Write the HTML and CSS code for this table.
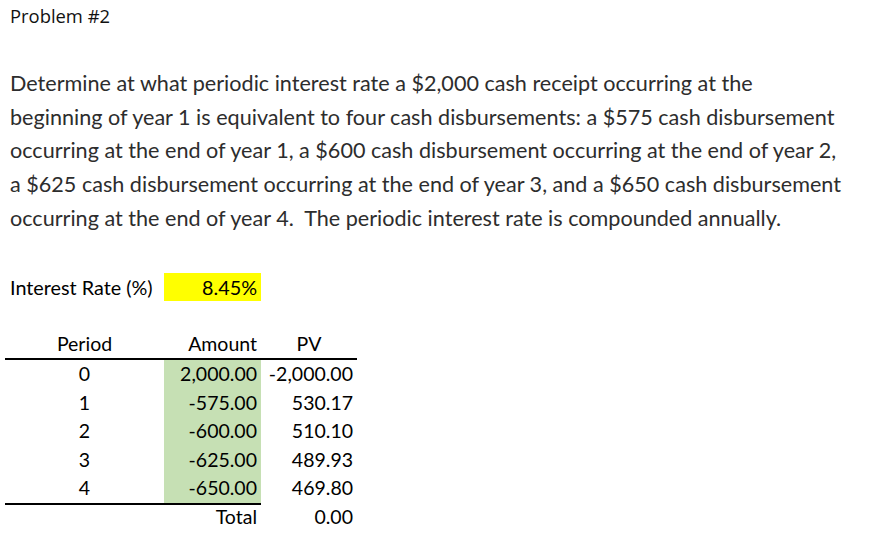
FILE: index.html
```html
<!DOCTYPE html>
<html>
<head>
<meta charset="utf-8">
<link rel="stylesheet" href="styles.css">
</head>
<body>
<div class="page">
  <div class="title">Problem #2</div>
  <p class="problem">Determine at what periodic interest rate a $2,000 cash receipt occurring at the<br>beginning of year 1 is equivalent to four cash disbursements: a $575 cash disbursement<br>occurring at the end of year 1, a $600 cash disbursement occurring at the end of year 2,<br>a $625 cash disbursement occurring at the end of year 3, and a $650 cash disbursement<br>occurring at the end of year 4.&nbsp; The periodic interest rate is compounded annually.</p>
  <div class="rate">
    <div class="rate-label">Interest Rate (%)</div>
    <div class="rate-value">8.45%</div>
  </div>
  <div class="sheet">
    <div class="row head">
      <div class="c period">Period</div>
      <div class="c amount">Amount</div>
      <div class="c pv center">PV</div>
    </div>
    <div class="row">
      <div class="c period">0</div>
      <div class="c amount green">2,000.00</div>
      <div class="c pv">-2,000.00</div>
    </div>
    <div class="row">
      <div class="c period">1</div>
      <div class="c amount green">-575.00</div>
      <div class="c pv">530.17</div>
    </div>
    <div class="row">
      <div class="c period">2</div>
      <div class="c amount green">-600.00</div>
      <div class="c pv">510.10</div>
    </div>
    <div class="row">
      <div class="c period">3</div>
      <div class="c amount green">-625.00</div>
      <div class="c pv">489.93</div>
    </div>
    <div class="row last">
      <div class="c period">4</div>
      <div class="c amount green">-650.00</div>
      <div class="c pv">469.80</div>
    </div>
    <div class="row">
      <div class="c period"></div>
      <div class="c amount">Total</div>
      <div class="c pv">0.00</div>
    </div>
  </div>
</div>
</body>
</html>
```
FILE: styles.css
```css
html, body {
  margin: 0;
  padding: 0;
  background: #ffffff;
}
.page {
  padding: 3px 0 0 10px;
  color: #000;
}
.title {
  font-family: "Open Sans", sans-serif;
  font-size: 18.4px;
  line-height: 26px;
  color: #111;
}
.problem {
  font-family: Lato, sans-serif;
  font-size: 21.6px;
  line-height: 33.7px;
  color: #2d2d2d;
  margin: 38px 0 0 0;
  white-space: nowrap;
}
.rate {
  display: flex;
  align-items: center;
  margin-top: 37px;
  font-family: Lato, sans-serif;
  font-size: 19.8px;
}
.rate-label {
  width: 154px;
}
.rate-value {
  width: 97px;
  height: 28px;
  line-height: 28px;
  background: #ffff00;
  text-align: right;
  padding-right: 4px;
  box-sizing: border-box;
}
.sheet {
  margin: 29px 0 0 -5px;
  width: 352px;
  font-family: Lato, sans-serif;
  font-size: 19.5px;
}
.row {
  display: grid;
  grid-template-columns: 159px 97px 96px;
  height: 28.5px;
  line-height: 28.5px;
}
.row.head {
  border-bottom: 2px solid #000;
}
.row.last .period,
.row.last .amount {
  border-bottom: 2px solid #000;
}
.c {
  white-space: nowrap;
  box-sizing: border-box;
}
.period {
  text-align: center;
}
.amount {
  text-align: right;
  padding-right: 4px;
}
.pv {
  text-align: right;
  padding-right: 4px;
}
.pv.center {
  text-align: center;
  padding-right: 0;
}
.green {
  background: #c6e0b4;
}
```
